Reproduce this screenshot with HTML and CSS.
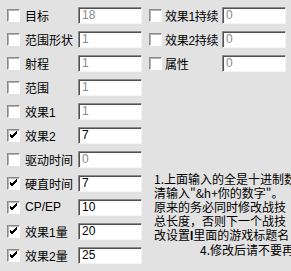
FILE: index.html
```html
<!DOCTYPE html>
<html lang="zh-CN">
<head>
  <meta charset="UTF-8" />
  <title>战技修改</title>
  <link rel="stylesheet" href="styles.css">
</head>
<body>
  <div class="panel">
    <div class="col left">
      <label class="row"><span class="chk"></span><span class="lbl">目标</span><input class="edit" value="18" disabled></label>
      <label class="row"><span class="chk"></span><span class="lbl">范围形状</span><input class="edit" value="1" disabled></label>
      <label class="row"><span class="chk"></span><span class="lbl">射程</span><input class="edit" value="1" disabled></label>
      <label class="row"><span class="chk"></span><span class="lbl">范围</span><input class="edit" value="1" disabled></label>
      <label class="row"><span class="chk"></span><span class="lbl">效果1</span><input class="edit" value="1" disabled></label>
      <label class="row"><span class="chk on"><svg viewBox="0 0 9 9"><path d="M1 4l2 2 5-5M1 5l2 2 5-5M1 6l2 2 5-5"/></svg></span><span class="lbl">效果2</span><input class="edit" value="7"></label>
      <label class="row"><span class="chk"></span><span class="lbl">驱动时间</span><input class="edit" value="0" disabled></label>
      <label class="row"><span class="chk on"><svg viewBox="0 0 9 9"><path d="M1 4l2 2 5-5M1 5l2 2 5-5M1 6l2 2 5-5"/></svg></span><span class="lbl">硬直时间</span><input class="edit" value="7"></label>
      <label class="row"><span class="chk on"><svg viewBox="0 0 9 9"><path d="M1 4l2 2 5-5M1 5l2 2 5-5M1 6l2 2 5-5"/></svg></span><span class="lbl">CP/EP</span><input class="edit" value="10"></label>
      <label class="row"><span class="chk on"><svg viewBox="0 0 9 9"><path d="M1 4l2 2 5-5M1 5l2 2 5-5M1 6l2 2 5-5"/></svg></span><span class="lbl">效果1量</span><input class="edit" value="20"></label>
      <label class="row"><span class="chk on"><svg viewBox="0 0 9 9"><path d="M1 4l2 2 5-5M1 5l2 2 5-5M1 6l2 2 5-5"/></svg></span><span class="lbl">效果2量</span><input class="edit" value="25"></label>
    </div>
    <div class="col right">
      <label class="row"><span class="chk"></span><span class="lbl">效果1持续</span><input class="edit" value="0" disabled></label>
      <label class="row"><span class="chk"></span><span class="lbl">效果2持续</span><input class="edit" value="0" disabled></label>
      <label class="row"><span class="chk"></span><span class="lbl">属性</span><input class="edit" value="0" disabled></label>
      <p class="note">1.上面输入的全是十进制数<br>清输入"&amp;h+你的数字"。<br>原来的务必同时修改战技<br>总长度，否则下一个战技<br>改设置<b>I</b>里面的游戏标题名<br><span class="indent">4.修改后请不要再</span></p>
    </div>
  </div>
</body>
</html>
```

FILE: styles.css
```css
*,*::before,*::after{box-sizing:border-box;margin:0;padding:0}
html,body{overflow:hidden}
body{font-family:"Liberation Sans","Noto Sans CJK SC",sans-serif;font-size:12px;color:#000;background:#e2e2e2;width:291px;height:271px}

.panel{display:flex;padding-top:3px}
.col.left{width:145px;padding-left:7px}
.col.right{padding-left:7px}

.row{display:flex;align-items:center;height:24px}
.chk{width:13px;height:13px;flex:none;background:#fff;border:1px solid;border-color:#8a8a8a #fff #fff #8a8a8a;box-shadow:inset 1px 1px #b4b4b4;display:flex;align-items:center;justify-content:center}
.chk svg{width:9px;height:9px;margin-top:-1px}
.chk svg path{fill:none;stroke:#000;stroke-width:1}
.left .lbl{width:53px;margin-left:5px;white-space:nowrap}
.right .lbl{width:57px;margin-left:3px;white-space:nowrap;letter-spacing:-.3px}

.edit{width:64px;height:17px;flex:none;font:12px "Liberation Sans",sans-serif;color:#000;background:#fff;padding:0 3px;border:1px solid;border-color:#8c8c8c #f4f4f4 #f4f4f4 #8c8c8c;box-shadow:inset 1px 1px #505050;outline:none}
.edit:disabled{color:#8a8a8a;-webkit-text-fill-color:#8a8a8a;opacity:1}

.note{margin-top:97px;margin-left:5px;font-family:"Noto Sans CJK SC","Liberation Sans",sans-serif;font-size:12px;line-height:14px;white-space:nowrap}
.note b{font-family:"Liberation Sans",sans-serif}
.indent{padding-left:46px}
```
